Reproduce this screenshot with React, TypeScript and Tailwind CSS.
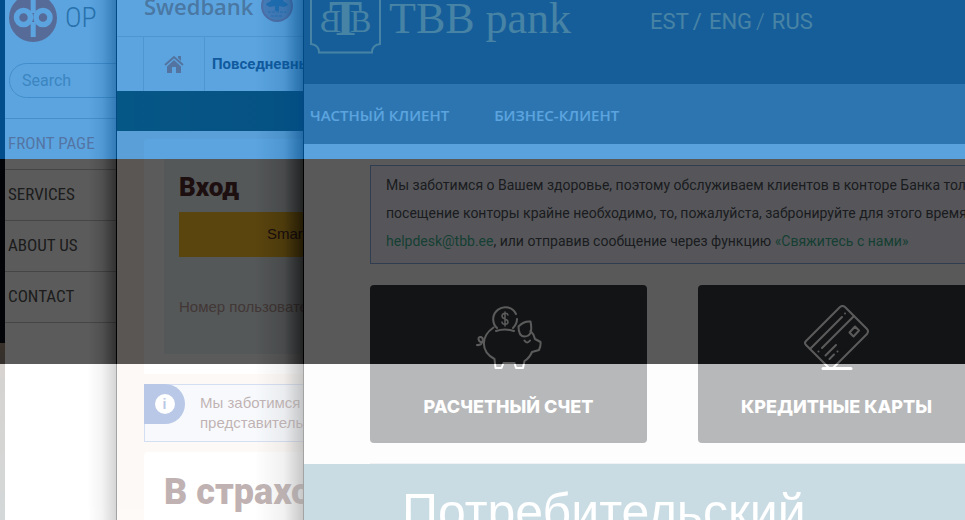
import type { ReactNode } from "react";

const MENU = ["FRONT PAGE", "SERVICES", "ABOUT US", "CONTACT"];

function OpLogo() {
  return (
    <svg width="48" height="48" viewBox="0 0 48 48" className="shrink-0" aria-hidden="true">
      <circle cx="24" cy="24" r="24" fill="#f4603c" />
      <g fill="none" stroke="#fff" strokeWidth="5.500">
        <circle cx="14.500" cy="23.500" r="7" />
        <circle cx="34" cy="23.500" r="7" />
        <path d="M24.200 4v15M24.200 28v15" strokeWidth="5" />
      </g>
    </svg>
  );
}

function HomeIcon() {
  return (
    <svg width="20" height="18" viewBox="0 0 20 18" aria-hidden="true">
      <path d="M1 10 10 2l9 8" fill="none" stroke="#e87850" strokeWidth="2" />
      <path d="M14 1h3v5l-3-3zM3 11.500 10 5l7 6.500V18h-5v-6H8v6H3z" fill="#e87850" />
    </svg>
  );
}

function CoinIcon() {
  return (
    <svg width="32" height="32" viewBox="0 0 32 32" aria-hidden="true">
      <circle cx="16" cy="16" r="15" fill="#c89090" stroke="#e06a60" strokeWidth="2" />
      <path d="M5 15c1-4 5-2 5-5 3-3 9-3 12 0 1 3 4 2 5 5l-4 2-5-1 0 5h-4v-5l-5 1z" fill="#5c6a80" />
      <path d="M7 22h18M10 26h12" stroke="#8a7a88" strokeWidth="1.500" strokeDasharray="3 1" />
    </svg>
  );
}

function TbbLogo() {
  return (
    <svg width="72" height="70" viewBox="0 0 72 70" className="shrink-0 text-[#c8a45c]" aria-hidden="true">
      <path d="M1 0v60q8 1 8 8.500h53q0-7.500 8-8.500V0" fill="none" stroke="currentColor" strokeWidth="2" />
      <g fill="currentColor" fontFamily="Liberation Serif, serif">
        <text x="-31" y="48" fontSize="32" transform="scale(-1 1)">B</text>
        <text x="40" y="48" fontSize="32">B</text>
        <text x="19" y="51" fontSize="50" fontWeight="bold">T</text>
      </g>
    </svg>
  );
}

function PiggyIcon() {
  return (
    <svg width="66" height="66" viewBox="0 0 66 66" fill="none" stroke="#fff" strokeWidth="2" strokeLinecap="round" strokeLinejoin="round" aria-hidden="true">
      <path d="M21 23a12 12 0 1 1 19-14M41 14q0 5-4 9" />
      <path d="M32 10c-1-3-6-2-6 1 0 4 6 2 6 6 0 3-6 3-6 0M29 7v14" strokeWidth="1.500" />
      <path d="M20 26q9-3 18 0M17.500 22.500C5 31 4 46 18.500 54l1 9h6l2-5h11l1.500 5H47l1.500-7q5-3 7.500-9l7-2q2-4 1.500-8L59 34q-1-5-4.500-8" />
      <path d="M54.500 16.500q-7-.5-12 5c0 6 1 10 6 10 6 0 8-5 6-15zM48.500 35.500q2.500 4 5.500 0M1 40c5 1 8-6 4-8-4-1-3 6 2 5" />
    </svg>
  );
}

function CreditCardIcon() {
  return (
    <svg width="66" height="66" viewBox="0 0 66 66" fill="none" stroke="#fff" strokeWidth="2" strokeLinecap="round" strokeLinejoin="round" aria-hidden="true">
      <path d="M25 63 2 40q-2-2 0-4L36 2q2-2 5 0l22 22q2 2 0 5L29 63" />
      <path d="M6 44l32-32M41 8.500v0M18 43l32-32M14.500 46.500v0M21.500 50.500l10.500-10.500M25.500 54l4.500-4.500M33.500 46.500v0" />
      <path d="m51 21.500 4 4-5.500 6-4-4z" />
      <path d="M19 63.500h28" strokeWidth="3" />
    </svg>
  );
}

function ProductCard({ icon, title }: { icon: ReactNode; title: string }) {
  return (
    <a href="#" className="flex h-[158px] w-[277px] shrink-0 flex-col items-center rounded bg-[#373a3e] pt-5 text-white">
      {icon}
      <span className="mt-6 font-['Inter',sans-serif] text-lg leading-6 font-extrabold whitespace-nowrap">{title}</span>
    </a>
  );
}

function OpPanel() {
  return (
    <aside className="relative w-28 shrink-0 overflow-hidden border-r border-black bg-white font-['Roboto_Condensed','Roboto',sans-serif] text-[#505050]">
      <div className="-mt-1.5 flex h-12 items-center gap-2 pl-1">
        <OpLogo />
        <span className="text-[28px] font-light text-[#707070]">OP</span>
      </div>
      <input
        type="text"
        aria-label="Search"
        placeholder="Search"
        className="mt-[21px] mb-5 ml-1 block h-[35px] w-40 rounded-full border border-[#b8c0c8] px-3 font-['Roboto',sans-serif] text-base placeholder:text-[#a8a8a8]"
      />
      <nav className="border-b border-[#c4c4c4] text-[17px]">
        {MENU.map((item) => (
          <a key={item} href="#" className={`flex h-[51px] items-center border-t border-[#c4c4c4] pl-[3px] whitespace-nowrap ${item === "FRONT PAGE" ? "text-[#ec7c58]" : ""}`}>
            {item}
          </a>
        ))}
      </nav>
      <div className="pointer-events-none absolute inset-y-0 right-0 w-7 bg-linear-to-l from-black/45 via-black/12 to-transparent" />
    </aside>
  );
}

function SwedbankPanel() {
  return (
    <section className="relative w-[187px] shrink-0 overflow-hidden border-r border-black bg-[#fcf1e9] font-['Liberation_Sans',sans-serif] text-[#512b2b]">
      <header className="bg-white">
        <div className="flex h-[37px] items-start gap-2 border-b border-[#d8d8d8] pl-[27px]">
          <span className="-mt-2 font-['Open_Sans',sans-serif] text-[22px] leading-7 font-semibold text-[#d08458]">Swedbank</span>
          <span className="-mt-2.5">
            <CoinIcon />
          </span>
        </div>
        <nav className="flex h-[54px] pl-[26px]">
          <a href="#" aria-label="Home" className="flex w-[62px] shrink-0 items-center justify-center border-x border-[#d8d8d8]">
            <HomeIcon />
          </a>
          <a href="#" className="flex items-center pl-[7px] font-['Roboto',sans-serif] text-[15px] font-bold whitespace-nowrap text-[#30304a]">
            Повседневный
          </a>
        </nav>
      </header>
      <div className="h-10 bg-linear-to-r from-[#102808] to-[#101800]" />
      <div className="mt-2 ml-[27px] rounded-tl bg-white py-5 pl-5">
        <form className="h-[195px] bg-[#edf5f8] pt-3 pl-[15px]">
          <h2 className="font-['Roboto',sans-serif] text-[26px] leading-8 font-black">Вход</h2>
          <button type="button" className="mt-[9px] block h-[45px] w-[236px] bg-[#fdc129] text-[15px]">
            Smart-ID
          </button>
          <label htmlFor="userId" className="mt-10 block text-[15px] leading-5 whitespace-nowrap text-[#b89c98]">
            Номер пользователя
          </label>
          <input id="userId" type="text" className="sr-only" />
        </form>
      </div>
      <div className="mt-2.5 ml-[27px] flex h-[58px] gap-[15px] border border-r-0 border-[#8aa8dc] bg-[#e9f0fb]">
        <span className="-mt-px -ml-px flex h-10 w-[41px] shrink-0 items-center justify-center rounded-r-full bg-[#3a67ba]">
          <span className="size-5 rounded-full bg-white text-center text-sm leading-5 font-bold text-[#3a67ba]">i</span>
        </span>
        <p className="pt-2 text-[15px] leading-5 whitespace-nowrap">
          Мы заботимся
          <br />
          представительства
        </p>
      </div>
      <div className="mt-2.5 ml-[27px] h-24 rounded-tl bg-white pt-4 pl-5">
        <h2 className="font-['Roboto',sans-serif] text-4xl leading-12 font-black whitespace-nowrap">В страховании</h2>
      </div>
      <div className="pointer-events-none absolute inset-y-0 right-0 w-12 bg-linear-to-l from-black/60 via-black/15 via-40% to-transparent" />
    </section>
  );
}

function TbbPanel() {
  return (
    <section className="min-w-0 flex-1 overflow-hidden bg-[#fafafa] font-['Roboto',sans-serif]">
      <header className="flex h-[84px] items-start bg-[#3c3c3f] pl-1.5 text-[#c8a45c]">
        <div className="-mt-4 flex items-start gap-[7px]">
          <TbbLogo />
          <span className="pt-2.5 font-['Liberation_Serif',serif] text-[44px] leading-[50px] whitespace-nowrap">TBB pank</span>
        </div>
        <nav className="ml-[79px] flex pt-2 text-[22px] leading-7">
          <a href="#">EST</a>
          <span className="pr-[7px] pl-1">/</span>
          <a href="#">ENG</a>
          <span className="pr-[7px] pl-1 font-light">/</span>
          <a href="#">RUS</a>
        </nav>
      </header>
      <nav className="flex h-[60px] items-center gap-[45px] bg-[#7e7c7c] pt-0.5 pl-1.5 font-['Open_Sans',sans-serif] text-[15px] font-semibold whitespace-nowrap text-white">
        <a href="#">ЧАСТНЫЙ КЛИЕНТ</a>
        <a href="#">БИЗНЕС-КЛИЕНТ</a>
      </nav>
      <div className="pt-[21px] pl-[66px]">
        <p className="border border-r-0 border-[#88a8e0] bg-[#f0f2fc] pt-[5px] pb-2 pl-[15px] text-sm leading-7 whitespace-nowrap text-[#4c5058]">
          Мы заботимся о Вашем здоровье, поэтому обслуживаем клиентов в конторе Банка только
          <br />
          посещение конторы крайне необходимо, то, пожалуйста, забронируйте для этого время
          <br />
          <a href="#" className="text-[#3fb090]">helpdesk@tbb.ee</a>, или отправив сообщение через функцию{" "}
          <a href="#" className="text-[#3fb090]">«Свяжитесь с нами»</a>
        </p>
        <div className="mt-[21px] flex gap-[51px] border-b border-[#d8dce0] pb-5">
          <ProductCard icon={<PiggyIcon />} title="РАСЧЕТНЫЙ СЧЕТ" />
          <ProductCard icon={<CreditCardIcon />} title="КРЕДИТНЫЕ КАРТЫ" />
        </div>
      </div>
      <div className="h-40 bg-[#6c9eb2] pt-4 pl-[98px]">
        <h1 className="font-['Liberation_Sans',sans-serif] text-[50px] leading-[64px] text-white">Потребительский</h1>
      </div>
    </section>
  );
}

export default function App() {
  return (
    <div className="relative flex h-screen overflow-hidden">
      <div className="flex w-[5px] shrink-0 flex-col bg-[#060c16]">
        <div className="mt-[343px] flex-1 bg-linear-to-b from-[#a08a78] via-[#8c8680] via-20% to-[#8a9494]" />
      </div>
      <OpPanel />
      <SwedbankPanel />
      <TbbPanel />

      {/* Estonian tricolour laid over the three sites */}
      <div className="pointer-events-none absolute inset-0 flex flex-col opacity-64">
        <div className="h-[159px] bg-[#0072ce]" />
        <div className="h-[205px] bg-black" />
        <div className="flex-1 bg-white" />
      </div>
    </div>
  );
}
